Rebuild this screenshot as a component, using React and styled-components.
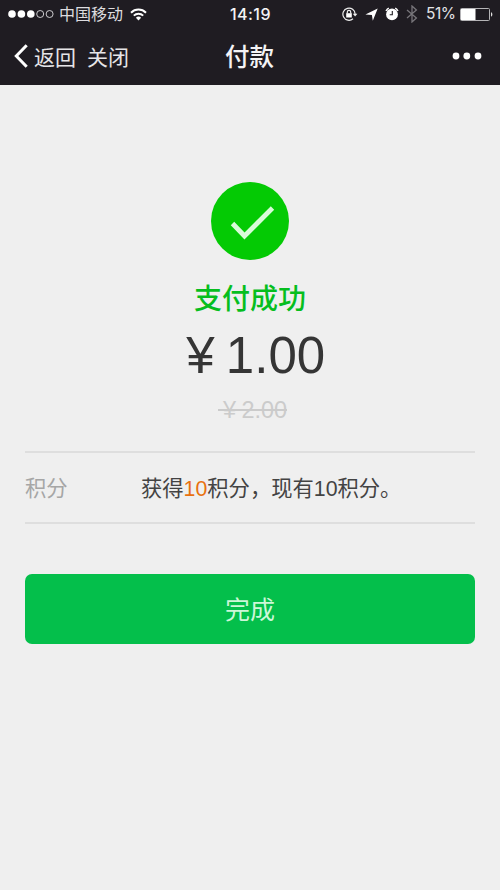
import React from "react";
import styled, { createGlobalStyle } from "styled-components";

const GlobalStyle = createGlobalStyle`
  * { box-sizing: border-box; }
  body {
    margin: 0;
    background: #efefef;
    font-family: "Liberation Sans", "Noto Sans CJK SC", sans-serif;
  }
`;

const Screen = styled.div`
  width: 500px;
  height: 890px;
  background: #efefef;
  overflow: hidden;
`;

const Header = styled.header`
  height: 85px;
  background: #1f1c22;
  color: #f4f3f5;
`;

const StatusBar = styled.div`
  height: 28px;
  display: grid;
  grid-template-columns: 1fr auto 1fr;
  align-items: center;
  padding: 0 7px 0 8px;
  font-size: 16px;
  line-height: 28px;
`;

const StatusGroup = styled.div`
  display: flex;
  align-items: center;
  justify-content: ${(p) => (p.$end ? "flex-end" : "flex-start")};
  svg { display: block; flex: none; }
`;

const Carrier = styled.span`
  margin: -2px 7px 0 5px;
  color: #dddcdf;
  font-family: "Noto Sans CJK SC", sans-serif;
  font-size: 16px;
`;

const Clock = styled.span`
  font-family: Inter, sans-serif;
  font-size: 16px;
  font-weight: 500;
  letter-spacing: 0.45px;
`;

const Percent = styled.span`
  margin: 0 4px 0 8px;
  width: 30px;
  color: #e4e3e6;
  font-family: Inter, sans-serif;
  font-size: 15.5px;
  letter-spacing: -0.5px;
`;

const NavBar = styled.nav`
  height: 57px;
  display: grid;
  grid-template-columns: 1fr auto 1fr;
  align-items: center;
  padding: 0 18px 1px 14px;
  font-family: "Noto Sans CJK SC", sans-serif;
`;

const NavActions = styled.div`
  display: flex;
  align-items: center;
  font-size: 21px;
  line-height: 30px;
  svg { display: block; margin-right: 6px; }
`;

const NavLink = styled.span`
  margin-right: 11px;
  padding-bottom: 1px;
  color: #e6e5e8;
`;

const Title = styled.h1`
  margin: 0;
  padding: 0 0 1px 3px;
  font-size: 24.5px;
  line-height: 36px;
  font-weight: 500;
`;

const MoreButton = styled.div`
  justify-self: end;
  svg { display: block; }
`;

const Result = styled.section`
  display: flex;
  flex-direction: column;
  align-items: center;
  padding-top: 97px;
`;

const ResultIcon = styled.svg`
  display: block;
  width: 78px;
  height: 78px;
`;

const ResultText = styled.div`
  margin-top: 17px;
  color: #06be1e;
  font-family: "Noto Sans CJK SC", sans-serif;
  font-size: 28px;
  font-weight: 500;
  line-height: 40px;
`;

const Amount = styled.div`
  display: flex;
  margin-top: 9px;
  color: #353535;
  font-size: 51px;
  line-height: 60px;
`;

const OldAmount = styled.div`
  position: relative;
  display: flex;
  margin: 9px 0 0 5px;
  color: #cbcbcb;
  font-size: 23.5px;
  line-height: 30px;

  &::after {
    content: "";
    position: absolute;
    left: 0;
    right: 0;
    top: 14px;
    height: 2px;
    background: #cbcbcb;
  }
`;

const Currency = styled.span`
  width: 1em;
  text-align: center;
`;

const Details = styled.dl`
  margin: 26px 25px 0;
  padding-top: 2px;
  height: 73px;
  display: flex;
  align-items: center;
  border-top: 2px solid #dedede;
  border-bottom: 2px solid #dedede;
  font-size: 21.3px;
  line-height: 30px;
`;

const Label = styled.dt`
  width: 116px;
  color: #a6a6a6;
`;

const Value = styled.dd`
  margin: 0;
  color: #434343;
`;

const Points = styled.span`
  color: #e8710f;
`;

const DoneButton = styled.button`
  display: block;
  width: 450px;
  height: 70px;
  margin: 50px 25px 0;
  padding: 0 0 2px;
  border: 0;
  border-radius: 7px;
  background: #04bf4b;
  color: #cdf7d8;
  font-family: "Noto Sans CJK SC", sans-serif;
  font-size: 25px;
  line-height: 68px;
`;

const SignalIcon = () => (
  <svg width="46" height="10" viewBox="0 0 46 10" fill="#fff">
    <circle cx="4" cy="5" r="3.8" />
    <circle cx="13.4" cy="5" r="3.8" />
    <circle cx="22.8" cy="5" r="3.8" />
    <g fill="none" stroke="#dedde0" strokeWidth="0.9">
      <circle cx="32.2" cy="5" r="3.5" />
      <circle cx="41.6" cy="5" r="3.5" />
    </g>
  </svg>
);

const WifiIcon = () => (
  <svg width="17" height="13" viewBox="0 0 17 13" fill="none" stroke="#fff" strokeWidth="2">
    <path d="M1 4.7a10.6 10.6 0 0 1 15 0" />
    <path d="M3.8 7.6a6.7 6.7 0 0 1 9.4 0" />
    <path d="M8.5 12.4 5.9 9.8a3.7 3.7 0 0 1 5.2 0z" fill="#fff" stroke="none" />
  </svg>
);

const RotationLockIcon = () => (
  <svg width="16" height="14" viewBox="0 0 16 14" fill="none" stroke="#eee" strokeWidth="1.2">
    <path d="M11 11.8A6.1 6.1 0 1 1 13.1 7" />
    <path d="M10.8 6.7h4.6L13.1 9.6z" fill="#eee" stroke="none" />
    <rect x="4.2" y="6.2" width="5.6" height="4.3" fill="#fff" stroke="none" />
    <path d="M5.3 6.4V5a1.7 1.7 0 0 1 3.4 0v1.4" />
  </svg>
);

const LocationIcon = () => (
  <svg width="13" height="13" viewBox="0 0 13 13" fill="#fff">
    <path d="M12.7.4 7.8 12.8 6.9 7 .4 6.6z" />
  </svg>
);

const AlarmIcon = () => (
  <svg width="14" height="14" viewBox="0 0 14 14">
    <circle cx="7" cy="7.4" r="5.9" fill="#fff" />
    <path d="M1 4A6.8 6.8 0 0 1 3.8 1.2M10.2 1.2A6.8 6.8 0 0 1 13 4" fill="none" stroke="#fff" strokeWidth="1.4" />
    <path d="M7.3 4v3.8H4.7" fill="none" stroke="#1f1c22" strokeWidth="1.1" />
  </svg>
);

const BluetoothIcon = () => (
  <svg width="12" height="18" viewBox="0 0 12 18" fill="none" stroke="#77757a" strokeWidth="1.3">
    <path d="M1 5l9.4 8L6 17V1l4.4 4L1 13" />
  </svg>
);

const BatteryIcon = () => (
  <svg width="33" height="13" viewBox="0 0 33 13">
    <rect x=".5" y=".5" width="29" height="12" rx="1" fill="none" stroke="#b5b4b7" />
    <rect x="1" y="1" width="14.5" height="11" fill="#fff" />
    <path d="M31 4.3c1.8.5 1.8 3.9 0 4.4z" fill="#ddd" />
  </svg>
);

const BackIcon = () => (
  <svg width="14" height="24" viewBox="0 0 14 24" fill="none" stroke="#fff" strokeWidth="3">
    <path d="M12.7 1.3 2.3 12l10.4 10.7" />
  </svg>
);

const MoreIcon = () => (
  <svg width="30" height="8" viewBox="0 0 30 8" fill="#fff">
    <circle cx="4" cy="4" r="3.4" />
    <circle cx="14.8" cy="4" r="3.4" />
    <circle cx="26" cy="4" r="3.4" />
  </svg>
);

const Icons = styled.div`
  display: flex;
  align-items: center;
  gap: ${(p) => p.$gap};
`;

export default function App() {
  return (
    <Screen>
      <GlobalStyle />
      <Header>
        <StatusBar>
          <StatusGroup>
            <SignalIcon />
            <Carrier>中国移动</Carrier>
            <WifiIcon />
          </StatusGroup>
          <Clock>14:19</Clock>
          <StatusGroup $end>
            <Icons $gap="7px">
              <RotationLockIcon />
              <LocationIcon />
              <AlarmIcon />
              <BluetoothIcon />
            </Icons>
            <Percent>51%</Percent>
            <BatteryIcon />
          </StatusGroup>
        </StatusBar>
        <NavBar>
          <NavActions>
            <BackIcon />
            <NavLink>返回</NavLink>
            <NavLink>关闭</NavLink>
          </NavActions>
          <Title>付款</Title>
          <MoreButton>
            <MoreIcon />
          </MoreButton>
        </NavBar>
      </Header>
      <Result>
        <ResultIcon viewBox="0 0 78 78">
          <circle cx="39" cy="39" r="39" fill="#04ca04" />
          <path d="M21.5 41.5 33.5 54 61.5 26" fill="none" stroke="#d8fbd8" strokeWidth="4.8" />
        </ResultIcon>
        <ResultText>支付成功</ResultText>
        <Amount>
          <Currency>¥</Currency>1.00
        </Amount>
        <OldAmount>
          <Currency>¥</Currency>2.00
        </OldAmount>
      </Result>
      <Details>
        <Label>积分</Label>
        <Value>
          获得<Points>10</Points>积分，现有10积分。
        </Value>
      </Details>
      <DoneButton>完成</DoneButton>
    </Screen>
  );
}
